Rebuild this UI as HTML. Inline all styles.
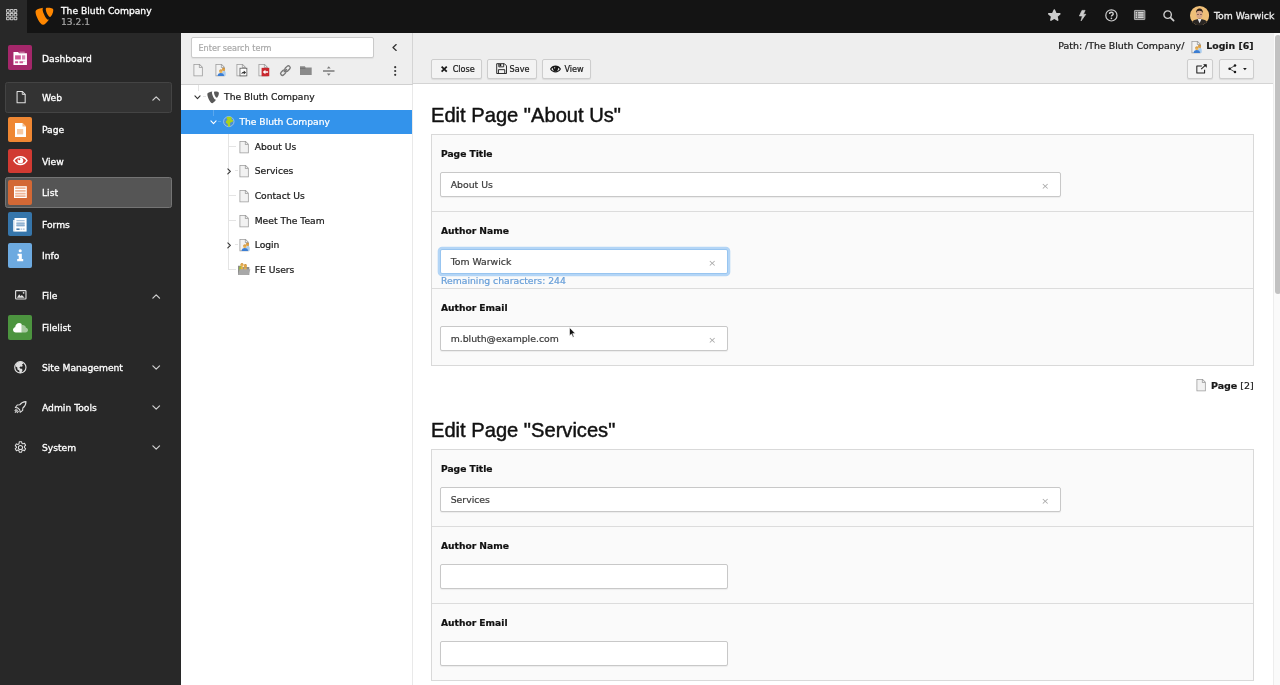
<!DOCTYPE html>
<html lang="en">
<head>
<meta charset="utf-8">
<title>TYPO3 Backend</title>
<style>
*{box-sizing:border-box;margin:0;padding:0}
html,body{width:1280px;height:685px;overflow:hidden;background:#fff}
body{font-family:"DejaVu Sans","Liberation Sans",sans-serif;font-size:9.19px;color:#1a1a1a;position:relative;line-height:1;-webkit-text-stroke:.22px}
svg{display:block;position:absolute;overflow:visible}
/* ---------- top bar ---------- */
#topbar{position:absolute;left:0;top:0;width:1280px;height:32.600px;background:#141414;will-change:transform;z-index:10}
#toggle{position:absolute;left:0;top:0;width:27px;height:32.600px;background:#282828}
.tb-title{position:absolute;left:61px;top:6.200px;-webkit-text-stroke:.3px;color:#fff;font-size:9.19px;white-space:nowrap}
.tb-ver{position:absolute;left:61px;top:17.200px;color:#a6a6a6;font-size:9.19px;white-space:nowrap}
.tb-user{position:absolute;left:1214px;top:11px;-webkit-text-stroke:.3px;color:#ececec;font-size:9.25px;white-space:nowrap}
/* ---------- module menu ---------- */
#sidebar{position:absolute;left:0;top:32px;width:181px;height:653px;background:#282828;will-change:transform}
.mi{position:absolute;left:0;width:180px;height:0;color:#fff;white-space:nowrap}
.mi .ic{position:absolute;left:8px;top:-11.700px;width:24.400px;height:24.400px;border-radius:2px}
.mi .tx{position:absolute;left:42px;top:-4.400px;font-size:9.19px;line-height:11px;-webkit-text-stroke:.3px}
.box{position:absolute;left:5px;width:166.500px;border-radius:2.500px}
/* ---------- tree ---------- */
#treepanel{position:absolute;left:181px;top:32px;width:232px;height:653px;background:#fff;border-right:1px solid #e9e9e9;will-change:transform}
#treebar{position:absolute;left:0;top:0;width:232px;height:52.500px;background:#eeeeee;border-bottom:1px solid #d0d0d0;border-right:1px solid #d4d4d4}
#search{position:absolute;left:9.900px;top:4.700px;width:183.100px;height:21.500px;background:#fff;border:1px solid #cacaca;border-radius:2px;box-shadow:0 1px 1px rgba(0,0,0,.06)}
#search span{position:absolute;left:6.600px;top:6.300px;font-size:8.100px;color:#a9a9a9;white-space:nowrap}
.row{position:absolute;left:0;width:231px;height:24.300px;z-index:2}
.row .tx{position:absolute;top:6.400px;font-size:9.19px;line-height:11px;white-space:nowrap;color:#1a1a1a}
.selbg{position:absolute;left:0;width:231px;height:24.100px;background:#3393eb;z-index:0}
.row.sel .tx{color:#fff}
.ln{position:absolute;background:#e4e4e4;z-index:1}
/* ---------- content ---------- */
#content{position:absolute;left:413px;top:32px;width:867px;height:653px;background:#fff;will-change:transform}
#docheader{position:absolute;left:0;top:0;width:859.800px;height:51.500px;background:#eeeeee;border-bottom:1px solid #d4d4d4}
.path{position:absolute;top:8.300px;font-size:9.420px;line-height:11px;white-space:nowrap;color:#1a1a1a}
.btn{position:absolute;top:27px;height:20px;background:#f3f3f3;border:1px solid #cdcdcd;border-radius:2px;box-shadow:0 1px 1px rgba(0,0,0,.08);font-size:8.100px;color:#1a1a1a;white-space:nowrap}
.btn .t{position:absolute;top:5px}
h1{position:absolute;left:18.300px;font-family:"Liberation Sans","DejaVu Sans",sans-serif;font-weight:400;font-size:20.400px;line-height:24px;color:#111;white-space:nowrap;transform:scaleX(.987);transform-origin:0 0;-webkit-text-stroke:.45px}
.panel{position:absolute;left:18px;width:823px;height:232px;background:#fafafa;border:1px solid #d9d9d9}
.sec{position:absolute;left:0;width:821px;height:77px;border-top:1px solid #dcdcdc}
.sec:first-child{border-top:0}
.lbl{position:absolute;left:9px;font-weight:700;font-size:9.130px;line-height:11px;white-space:nowrap;color:#111}
.inp{position:absolute;left:8px;height:24.600px;background:#fff;border:1px solid #c8c8c8;border-radius:2px;box-shadow:0 1px 1px rgba(0,0,0,.06)}
.inp.focus{border-color:#98c5f0;box-shadow:0 0 0 2.300px #b3d5f6}
.inp .v{position:absolute;left:9.700px;top:5.600px;font-size:9.300px;line-height:11px;white-space:nowrap;color:#3c3c3c}
.inp .x{position:absolute;right:10.400px;top:7.200px;font-size:9.500px;line-height:11px;color:#a6a6a6;-webkit-text-stroke:0}
.rem{position:absolute;left:9px;font-size:9.260px;line-height:11px;color:#689fd9;white-space:nowrap}
.pinfo{position:absolute;font-size:9.19px;line-height:11px;white-space:nowrap;color:#1a1a1a}
#sbtrack{position:absolute;left:859.800px;top:0;width:7.200px;height:653px;background:#fafafa;border-left:1px solid #ededed}
#sbthumb{position:absolute;left:861.800px;top:2.500px;width:6.600px;height:259px;background:#c1c1c1;border-radius:3px}
</style>
</head>
<body>

<div id="topbar"><div id="toggle"></div>
<svg style="left:5.8px;top:8.9px" width="11.4" height="11.4" viewBox="0 0 12 12" ><rect x="0.6" y="0.6" width="2.800" height="2.800" rx=".6" fill="none" stroke="#c6c6c6" stroke-width="1.100"/><rect x="4.6" y="0.6" width="2.800" height="2.800" rx=".6" fill="none" stroke="#c6c6c6" stroke-width="1.100"/><rect x="8.6" y="0.6" width="2.800" height="2.800" rx=".6" fill="none" stroke="#c6c6c6" stroke-width="1.100"/><rect x="0.6" y="4.6" width="2.800" height="2.800" rx=".6" fill="none" stroke="#c6c6c6" stroke-width="1.100"/><rect x="4.6" y="4.6" width="2.800" height="2.800" rx=".6" fill="none" stroke="#c6c6c6" stroke-width="1.100"/><rect x="8.6" y="4.6" width="2.800" height="2.800" rx=".6" fill="none" stroke="#c6c6c6" stroke-width="1.100"/><rect x="0.6" y="8.6" width="2.800" height="2.800" rx=".6" fill="none" stroke="#c6c6c6" stroke-width="1.100"/><rect x="4.6" y="8.6" width="2.800" height="2.800" rx=".6" fill="none" stroke="#c6c6c6" stroke-width="1.100"/><rect x="8.6" y="8.6" width="2.800" height="2.800" rx=".6" fill="none" stroke="#c6c6c6" stroke-width="1.100"/></svg>
<svg style="left:34.1px;top:6.8px" width="20.3" height="19.3" viewBox="0 0 16 16" preserveAspectRatio="none"><path fill="#ff8700" d="M11.900 10.400c-.2.100-.4.100-.6.100-1.800 0-4.500-6.400-4.500-8.500 0-.8.200-1 .4-1.300-2.200.3-4.900 1.100-5.700 2.100-.2.300-.3.700-.3 1.200 0 3.300 3.500 10.800 6 10.800 1.100 0 3-1.900 4.700-4.400M10.700.7c2.300 0 4.500.4 4.500 1.700 0 2.600-1.700 5.800-2.500 5.800-1.500 0-3.400-4.200-3.400-6.300 0-1 .4-1.200 1.400-1.200"/></svg>
<div class="tb-title">The Bluth Company</div><div class="tb-ver">13.2.1</div>
<svg style="left:1048.2px;top:9.3px" width="12.6" height="12.1" viewBox="0 0 16 16" preserveAspectRatio="none"><path fill="#cdcdcd" d="M8 1.300l2 4.600 5 .5-3.700 3.400 1 5L8 12.200l-4.300 2.600 1-5L1 6.400l5-.5z" stroke="#cdcdcd" stroke-width="2" stroke-linejoin="round"/></svg>
<svg style="left:1079px;top:9.7px" width="7.2" height="11.4" viewBox="0 0 8 12" preserveAspectRatio="none"><path fill="#cdcdcd" stroke="#cdcdcd" stroke-width=".7" stroke-linejoin="round" d="M3.300.4h3.500L4.800 4.500h2.800L2.300 11.500l1.400-5.200H.4z"/></svg>
<svg style="left:1105px;top:9px" width="12.8" height="12.8" viewBox="0 0 16 16" ><circle cx="8" cy="8" r="7" fill="none" stroke="#cfcfcf" stroke-width="1.500"/><path fill="none" stroke="#cfcfcf" stroke-width="1.700" d="M5.700 6.300c0-1.400 1-2.200 2.300-2.200s2.300.8 2.300 2c0 1.600-2.300 1.600-2.300 3.400"/><circle cx="8" cy="11.700" r="1.050" fill="#cfcfcf"/></svg>
<svg style="left:1134px;top:10.3px" width="11.3" height="10" viewBox="0 0 16 14" preserveAspectRatio="none"><rect x=".6" y=".6" width="14.800" height="12.800" rx=".6" fill="#6c6c6c" stroke="#c2c2c2" stroke-width="1.200"/><path fill="#d6d6d6" d="M2.400 2.800h2v2.200h-2zM5.800 2.800h7.800v2.200H5.800zM2.400 5.900h2v2.200h-2zM5.800 5.900h7.800v2.200H5.800zM2.400 9h2v2.200h-2zM5.800 9h7.800v2.200H5.800z"/></svg>
<svg style="left:1162.6px;top:9.7px" width="11.4" height="11.4" viewBox="0 0 16 16" ><circle cx="6.500" cy="6.500" r="5.200" fill="none" stroke="#cfcfcf" stroke-width="1.900"/><path stroke="#cfcfcf" stroke-width="2.400" stroke-linecap="round" d="M10.600 10.600l4.300 4.300"/></svg>
<svg style="left:1190.2px;top:5.5px" width="19.2" height="19.2" viewBox="0 0 20 20" ><clipPath id="av"><circle cx="10" cy="10" r="10"/></clipPath><g clip-path="url(#av)"><rect width="20" height="20" fill="#efbf78"/><path fill="#2a2623" d="M1 20c0-4 3-5.500 5.500-6l3.500-1 3.500 1c2.500.5 5.500 2 5.500 6z"/><path fill="#e8e8ee" d="M8 13.500l2 4.500 2-4.500z"/><ellipse cx="9.800" cy="8.600" rx="3.300" ry="4.400" fill="#d9a687"/><path fill="#2b1f1a" d="M6.300 7.500c-.3-3.500 1.500-5 3.700-5s3.800 1.500 3.300 5c-.5-1.800-1.500-2.600-3.500-2.600S6.800 5.700 6.300 7.500z"/><path fill="#3a2a24" d="M7.300 8.300h2v.6h-2zM10.400 8.300h2v.6h-2z"/></g></svg>
<div class="tb-user">Tom Warwick</div>
</div>
<div id="sidebar">
<div class="box" style="top:49.500px;height:31.500px;background:#333333;border:1px solid #444444"></div>
<div class="box" style="top:145px;height:31px;background:#555555;border:1px solid #747474"></div>
<div class="mi" style="top:25px"><div class="ic" style="background:#a4276a"><svg style="left:5px;top:5.2px" width="14.4" height="14.4" viewBox="0 0 16 16" ><path fill="#fff" d="M.5 1h5.300l.8 1.500h8.900v13H.500z"/><path fill="#fff" opacity=".55" d="M7 .800h6v1H7z"/><path fill="#cf5a97" d="M2.300 4.800h6.400v4.600H2.300z"/><path fill="#d98ab5" d="M10 4.800h3.600v4.600H10z"/><path fill="#cf5a97" d="M2.300 11.300h3.400v2.200H2.300zM7.200 11.300h4v2.200h-4z"/><path fill="#e7b3cf" d="M11.200 11.300h2.400v1h-2.400z"/></svg></div><div class="tx" style="top:-4.30px">Dashboard</div></div>
<div class="mi" style="top:65px"><svg style="left:14.7px;top:-6.3px" width="12.25" height="12.25" viewBox="0 0 16 16" ><path fill="none" stroke="#e0e0e0" stroke-width="1.400" stroke-linejoin="round" d="M2.700.7h7l3.600 3.600v11H2.700z"/><path fill="none" stroke="#e0e0e0" stroke-width="1.200" d="M9.500.7v3.800h3.800"/></svg><svg style="left:151.7px;top:-1.4px" width="8.4" height="5" viewBox="0 0 10 6" ><path fill="none" stroke="#cfcfcf" stroke-width="1.500" stroke-linecap="round" stroke-linejoin="round" d="M1 5l4-4 4 4"/></svg><div class="tx" style="top:-5.30px">Web</div></div>
<div class="mi" style="top:97px"><div class="ic" style="background:#ef8733"><svg style="left:7px;top:5.3px" width="11" height="14" viewBox="0 0 11 14" ><path fill="#fff" d="M0 0h7.500L11 3.500V14H0z"/><path fill="#f6c9a4" d="M2 6h6.200v5.400H2z"/><path fill="#f3b98a" d="M7.500 0v3.500H11z"/></svg></div><div class="tx" style="top:-5.30px">Page</div></div>
<div class="mi" style="top:128.5px"><div class="ic" style="background:#d13a32"><svg style="left:4.7px;top:7.4px" width="14.8" height="9.4" viewBox="0 0 16 10" ><path fill="none" stroke="#fff" stroke-width="1.500" d="M.9 5C2.600 2.200 5.200.8 8 .8s5.400 1.400 7.100 4.200C13.400 7.800 10.800 9.200 8 9.200S2.600 7.800.9 5z"/><circle cx="8" cy="4.800" r="3.100" fill="#fff"/><circle cx="6.800" cy="3.500" r="1.100" fill="#d13a32"/></svg></div><div class="tx" style="top:-4.80px">View</div></div>
<div class="mi" style="top:160px"><div class="ic" style="background:#d36835"><svg style="left:5.7px;top:5.8px" width="12.8" height="12.2" viewBox="0 0 13 12" ><rect width="13" height="12" fill="#fff"/><path fill="#efb597" d="M1.200 1.100h10.600v1.800H1.200zM1.200 3.900h10.600v1.800H1.200zM1.200 6.600h10.600v1.800H1.200zM1.200 9.300h10.600v1.700H1.200z"/></svg></div><div class="tx" style="top:-5.30px">List</div></div>
<div class="mi" style="top:191.5px"><div class="ic" style="background:#3676ab"><svg style="left:5px;top:6px" width="13.6" height="13.6" viewBox="0 0 14 14" ><path fill="#fff" opacity=".75" d="M0 2h2v12H0z"/><path fill="#fff" d="M1.500 0H14v14H1.500z"/><path fill="#a9c3dc" d="M3.500 2h8.500v1.300H3.500zM3.500 4.300h8.500v4.400H3.500z"/><path fill="#7fa6c9" d="M3.500 5.600h8.500v.7H3.500zM3.500 7.200h8.500v.7H3.500z"/><path fill="#2f6a9e" d="M3.500 10.800h3.300v1.400H3.500z"/><path fill="#a9c3dc" d="M7.800 10.800h1.800v1.400H7.800zM10.300 10.800H12v1.400h-1.700z"/></svg></div><div class="tx" style="top:-4.80px">Forms</div></div>
<div class="mi" style="top:223px"><div class="ic" style="background:#6daae0"><svg style="left:9.2px;top:5.8px" width="6.4" height="12.4" viewBox="0 0 7 13" ><circle cx="3.500" cy="1.700" r="1.700" fill="#fff"/><path fill="#fff" d="M.6 5h4.700v5.600h1.500V13H.2v-2.400h1.700V7.200H.6z"/></svg></div><div class="tx" style="top:-5.30px">Info</div></div>
<div class="mi" style="top:263px"><svg style="left:14.6px;top:-4.6px" width="11.6" height="9.6" viewBox="0 0 12 10" ><rect x=".6" y=".6" width="10.800" height="8.800" rx=".8" fill="none" stroke="#e0e0e0" stroke-width="1.200"/><path fill="#e0e0e0" d="M2 8.200l2.300-3.800 1.500 2.200 1.300-1.500L10 8.200z"/><circle cx="8.900" cy="2.900" r=".9" fill="#e0e0e0"/></svg><svg style="left:151.7px;top:-1.4px" width="8.4" height="5" viewBox="0 0 10 6" ><path fill="none" stroke="#cfcfcf" stroke-width="1.500" stroke-linecap="round" stroke-linejoin="round" d="M1 5l4-4 4 4"/></svg><div class="tx" style="top:-5.30px">File</div></div>
<div class="mi" style="top:295px"><div class="ic" style="background:#4c943f"><svg style="left:4.8px;top:7.3px" width="15" height="9.4" viewBox="0 0 16 10" ><path fill="#fff" opacity=".5" d="M9 10h4.300c1.500 0 2.700-1.100 2.700-2.500 0-1.300-1-2.300-2.200-2.500C13.500 3.300 12 2.200 10.500 2.200c-.5 0-1 .1-1.500.4z"/><path fill="#fff" d="M9.200 10H3C1.300 10 0 8.800 0 7.200c0-1.400 1-2.500 2.300-2.800C2.500 1.900 4.400 0 6.600 0c1 0 1.900.4 2.600 1z"/></svg></div><div class="tx" style="top:-5.30px">Filelist</div></div>
<div class="mi" style="top:335px"><svg style="left:14.1px;top:-6.3px" width="12.7" height="12.7" viewBox="0 0 16 16" ><circle cx="8" cy="8" r="7.100" fill="none" stroke="#e0e0e0" stroke-width="1.500"/><path fill="#e0e0e0" d="M4.600 2c1.800-1.100 4.600-1.300 6.300-.5l.8 2-1.700 1 1.200 1.700-1.700 1.200-1.600-.6-1.100 1.600 1.500 1.400 1.900.1.400 2.200-1.600 3.100-1.900.1-.5-3.200-2.200-1.500-.4-2.600-1.900-1 .6-2.800z"/></svg><svg style="left:151.7px;top:-1.9px" width="8.4" height="5" viewBox="0 0 10 6" ><path fill="none" stroke="#cfcfcf" stroke-width="1.500" stroke-linecap="round" stroke-linejoin="round" d="M1 1l4 4 4-4"/></svg><div class="tx" style="top:-5.30px">Site Management</div></div>
<div class="mi" style="top:375px"><svg style="left:13.8px;top:-6.3px" width="12.8" height="12.5" viewBox="0 0 16 16" ><path fill="none" stroke="#e0e0e0" stroke-width="1.350" stroke-linejoin="round" d="M15.200.8c-3.300.1-6.100 1.400-8.100 4.100L4 5.100 1.500 8.300l3 .5 2.700 2.700.5 3 3.200-2.500.2-3.100c2.700-2 4-4.800 4.100-8.100zM4.500 11.500L1 15M3 10.300L.7 12.500M5.700 13l-2.200 2.300"/></svg><svg style="left:151.7px;top:-1.9px" width="8.4" height="5" viewBox="0 0 10 6" ><path fill="none" stroke="#cfcfcf" stroke-width="1.500" stroke-linecap="round" stroke-linejoin="round" d="M1 1l4 4 4-4"/></svg><div class="tx" style="top:-5.30px">Admin Tools</div></div>
<div class="mi" style="top:415px"><svg style="left:14px;top:-6.5px" width="12.9" height="13" viewBox="0 0 16 16" ><path fill="none" stroke="#e0e0e0" stroke-width="1.300" stroke-linejoin="round" d="M6.600.8h2.800l.4 2 1.300.7 1.900-.7 1.400 2.400-1.500 1.400v1.500l1.500 1.400-1.400 2.400-1.900-.7-1.300.7-.4 2H6.600l-.4-2-1.300-.7-1.900.7-1.400-2.400 1.500-1.400V7.300L1.600 5.900 3 3.500l1.900.7 1.300-.7z"/><circle cx="8" cy="8" r="2.600" fill="none" stroke="#e0e0e0" stroke-width="1.300"/></svg><svg style="left:151.7px;top:-1.9px" width="8.4" height="5" viewBox="0 0 10 6" ><path fill="none" stroke="#cfcfcf" stroke-width="1.500" stroke-linecap="round" stroke-linejoin="round" d="M1 1l4 4 4-4"/></svg><div class="tx" style="top:-5.30px">System</div></div>
</div>
<div id="treepanel"><div id="treebar">
<div id="search"><span>Enter search term</span></div>
<svg style="left:211px;top:12px" width="5" height="7" viewBox="0 0 5 7" ><path fill="none" stroke="#333" stroke-width="1.300" stroke-linecap="round" stroke-linejoin="round" d="M4.200.6L1 3.500l3.200 2.900"/></svg>
<svg style="left:10.599999999999994px;top:31.9px" width="12.25" height="12.25" viewBox="0 0 16 16" ><path fill="#f2f2f2" d="M2.5.5v15h11V4.2L9.8.5z"/><path fill="#9a9a9a" d="M2 0v16h12V4L10 0H2zm1 1h6v4h4v10H3V1zm7 .4L12.6 4H10V1.400z"/></svg>
<svg style="left:32.5px;top:31.9px" width="12.25" height="12.25" viewBox="0 0 16 16" ><path fill="#f2f2f2" d="M2.5.5v15h11V4.2L9.8.5z"/><path fill="#9a9a9a" d="M2 0v16h12V4L10 0H2zm1 1h6v4h4v10H3V1zm7 .4L12.6 4H10V1.400z"/><path fill="#a9cdf0" d="M10.600 15.300v-3.600c0-1.600 1-2.500 2.300-2.500s2.400.9 2.400 2.500v3.600z"/><circle cx="12.400" cy="7.200" r="2" fill="#dfa044"/><path fill="#c98a2e" d="M10.500 6.600c.2-1.200 1-1.700 1.900-1.700s1.700.5 1.900 1.700c-.7-.6-1.300-.8-1.900-.8s-1.200.2-1.900.8z"/><path fill="#3b7dd2" d="M4.700 15.600c0-2.700 1.600-4 4.200-4s4.200 1.300 4.200 4z"/><circle cx="8.900" cy="9.700" r="2.200" fill="#e8b257"/><path fill="#c98a2e" d="M6.800 9.100c.2-1.300 1.100-1.900 2.100-1.900s1.900.6 2.100 1.900c-.8-.7-1.400-.9-2.100-.9s-1.300.2-2.100.9z"/></svg>
<svg style="left:53.599999999999994px;top:31.9px" width="12.25" height="12.25" viewBox="0 0 16 16" ><path fill="#f2f2f2" d="M2.5.5v15h11V4.2L9.8.5z"/><path fill="#9a9a9a" d="M2 0v16h12V4L10 0H2zm1 1h6v4h4v10H3V1zm7 .4L12.6 4H10V1.400z"/><rect x="6.500" y="5.500" width="9" height="10" fill="#fff" stroke="#555" stroke-width="1"/><path fill="#333" d="M8.300 13.500c0-2.200 1.200-3.500 3.200-3.500V8.400l3 2.600-3 2.600V12c-1.500 0-2.500.4-3.200 1.500z"/></svg>
<svg style="left:75.5px;top:31.9px" width="12.25" height="12.25" viewBox="0 0 16 16" ><path fill="#f2f2f2" d="M2.5.5v15h11V4.2L9.8.5z"/><path fill="#9a9a9a" d="M2 0v16h12V4L10 0H2zm1 1h6v4h4v10H3V1zm7 .4L12.6 4H10V1.400z"/><rect x="6" y="5" width="10" height="11" fill="#c8282f"/><path fill="#fff" d="M7.500 10.500l3.500-3v2h3.500v2H11v2z"/></svg>
<svg style="left:98.5px;top:32.7px" width="10.8" height="11.2" viewBox="0 0 16 16" ><g fill="none" stroke="#787878" stroke-width="2" stroke-linecap="round"><rect x="6.600" y="2.200" width="9" height="5.400" rx="2.700" transform="rotate(-45 11.100 4.900)" /><rect x=".4" y="8.400" width="9" height="5.400" rx="2.700" transform="rotate(-45 4.900 11.100)"/><path d="M6.200 9.800l3.600-3.600"/></g></svg>
<svg style="left:119.30000000000001px;top:34px" width="11.7" height="9.2" viewBox="0 0 12 9" ><path fill="#8a8a8a" d="M0 0h5l.8 1.300H12V9H0z"/><path fill="#6f6f6f" d="M0 1.700h5.500v.9H0z"/></svg>
<svg style="left:141.5px;top:33.5px" width="11.5" height="10" viewBox="0 0 12 10" ><path fill="#7a7a7a" d="M0 4.300h12v1.400H0zM6 0l2 2.300H4zM6 10l2-2.300H4z"/></svg>
<svg style="left:213px;top:34px" width="2.4" height="10" viewBox="0 0 2.400 10" ><circle cx="1.200" cy="1.200" r="1.100" fill="#333"/><circle cx="1.200" cy="5" r="1.100" fill="#333"/><circle cx="1.200" cy="8.800" r="1.100" fill="#333"/></svg>
</div>
<div class="ln" style="left:16.600px;top:53px;width:1px;height:6px"></div>
<div class="row" style="top:52.50px"><svg style="left:13.2px;top:10.7px" width="7" height="4.6" viewBox="0 0 7 5" ><path fill="none" stroke="#333" stroke-width="1.200" stroke-linecap="round" stroke-linejoin="round" d="M.7.900l2.800 3 2.800-3"/></svg><svg style="left:25.0px;top:6.215px" width="13.9" height="13.2" viewBox="0 0 16 16" ><path fill="#585858" d="M11.900 10.400c-.2.100-.4.100-.6.100-1.800 0-4.500-6.400-4.500-8.500 0-.8.200-1 .4-1.300-2.200.3-4.900 1.100-5.700 2.100-.2.300-.3.700-.3 1.200 0 3.300 3.500 10.800 6 10.800 1.100 0 3-1.900 4.700-4.400M10.700.7c2.300 0 4.500.4 4.500 1.700 0 2.600-1.700 5.800-2.500 5.800-1.500 0-3.400-4.200-3.400-6.300 0-1 .4-1.200 1.400-1.200"/></svg><div class="tx" style="left:43.10px;top:6.50px">The Bluth Company</div></div>
<div class="selbg" style="top:77.58px"></div>
<div class="row sel" style="top:77.18px"><svg style="left:28.5px;top:10.7px" width="7" height="4.6" viewBox="0 0 7 5" ><path fill="none" stroke="#fff" stroke-width="1.200" stroke-linecap="round" stroke-linejoin="round" d="M.7.900l2.800 3 2.800-3"/></svg><svg style="left:41.599999999999994px;top:7.015px" width="11.6" height="11.2" viewBox="0 0 16 16" preserveAspectRatio="none"><circle cx="8" cy="8" r="7.200" fill="#4b8fd6" stroke="#b9d3ee" stroke-width="1"/><path fill="#a9d21e" d="M5.500 1.500c2.200-.9 5-.5 6.500.5l-.3 2.500 2.300 1.500-.8 2.500-2.400.3-1.300 2.300.8 2.100-1.700 2.600-1.700-1-.5-3.200-2.500-1.800.2-2.700 2.200-1.800-1.500-1.600z"/></svg><div class="tx" style="left:58.40px;top:6.82px">The Bluth Company</div></div>
<div class="row" style="top:101.86px"><svg style="left:56.6px;top:6.715px" width="12.25" height="12.25" viewBox="0 0 16 16" ><path fill="#f2f2f2" d="M2.5.5v15h11V4.2L9.8.5z"/><path fill="#9a9a9a" d="M2 0v16h12V4L10 0H2zm1 1h6v4h4v10H3V1zm7 .4L12.6 4H10V1.400z"/></svg><div class="tx" style="left:73.70px;top:7.14px">About Us</div></div>
<div class="row" style="top:126.54px"><svg style="left:45.7px;top:9.6px" width="4.4" height="6.8" viewBox="0 0 5 7" ><path fill="none" stroke="#333" stroke-width="1.200" stroke-linecap="round" stroke-linejoin="round" d="M.9.700l3 2.800-3 2.800"/></svg><svg style="left:56.6px;top:6.715px" width="12.25" height="12.25" viewBox="0 0 16 16" ><path fill="#f2f2f2" d="M2.5.5v15h11V4.2L9.8.5z"/><path fill="#9a9a9a" d="M2 0v16h12V4L10 0H2zm1 1h6v4h4v10H3V1zm7 .4L12.6 4H10V1.400z"/></svg><div class="tx" style="left:73.70px;top:6.46px">Services</div></div>
<div class="row" style="top:151.22px"><svg style="left:56.6px;top:6.715px" width="12.25" height="12.25" viewBox="0 0 16 16" ><path fill="#f2f2f2" d="M2.5.5v15h11V4.2L9.8.5z"/><path fill="#9a9a9a" d="M2 0v16h12V4L10 0H2zm1 1h6v4h4v10H3V1zm7 .4L12.6 4H10V1.400z"/></svg><div class="tx" style="left:73.70px;top:6.78px">Contact Us</div></div>
<div class="row" style="top:175.90px"><svg style="left:56.6px;top:6.715px" width="12.25" height="12.25" viewBox="0 0 16 16" ><path fill="#f2f2f2" d="M2.5.5v15h11V4.2L9.8.5z"/><path fill="#9a9a9a" d="M2 0v16h12V4L10 0H2zm1 1h6v4h4v10H3V1zm7 .4L12.6 4H10V1.400z"/></svg><div class="tx" style="left:73.70px;top:7.10px">Meet The Team</div></div>
<div class="row" style="top:200.58px"><svg style="left:45.7px;top:9.6px" width="4.4" height="6.8" viewBox="0 0 5 7" ><path fill="none" stroke="#333" stroke-width="1.200" stroke-linecap="round" stroke-linejoin="round" d="M.9.700l3 2.800-3 2.800"/></svg><svg style="left:56.6px;top:6.715px" width="12.25" height="12.25" viewBox="0 0 16 16" ><path fill="#f2f2f2" d="M2.5.5v15h11V4.2L9.8.5z"/><path fill="#9a9a9a" d="M2 0v16h12V4L10 0H2zm1 1h6v4h4v10H3V1zm7 .4L12.6 4H10V1.400z"/><path fill="#a9cdf0" d="M10.600 15.300v-3.600c0-1.600 1-2.500 2.300-2.500s2.400.9 2.400 2.500v3.600z"/><circle cx="12.400" cy="7.200" r="2" fill="#dfa044"/><path fill="#c98a2e" d="M10.500 6.600c.2-1.200 1-1.700 1.900-1.700s1.700.5 1.900 1.700c-.7-.6-1.300-.8-1.900-.8s-1.200.2-1.900.8z"/><path fill="#3b7dd2" d="M4.700 15.600c0-2.700 1.600-4 4.200-4s4.200 1.300 4.200 4z"/><circle cx="8.900" cy="9.700" r="2.200" fill="#e8b257"/><path fill="#c98a2e" d="M6.800 9.100c.2-1.300 1.100-1.900 2.100-1.900s1.900.6 2.100 1.900c-.8-.7-1.400-.9-2.100-.9s-1.300.2-2.100.9z"/></svg><div class="tx" style="left:73.70px;top:6.42px">Login</div></div>
<div class="row" style="top:225.26px"><svg style="left:57.1px;top:5.615px" width="12.4" height="12" viewBox="0 0 12.4 12" ><path fill="#8c8c8c" d="M0 2.700h3.300l1 1.300h7V12H0z"/><path fill="#9cc32b" d="M1.300 7.500V4.600c0-.9.700-1.400 1.500-1.400s1.500.5 1.500 1.400v2.900z"/><path fill="#e6b04a" d="M2.700 7V3.800h2.600V7zM6.100 7.500V4.500h2.600v3z"/><circle cx="4" cy="2.100" r="1.700" fill="#e8b257"/><circle cx="7.400" cy="2.900" r="1.600" fill="#e0a445"/><path fill="#c98a2e" d="M2.400 1.700C2.600.700 3.300.300 4 .3s1.400.4 1.600 1.400C5 1.200 4.500 1 4 1s-1 .2-1.600.7zM5.900 2.500c.2-.9.800-1.300 1.500-1.300s1.300.4 1.500 1.300c-.5-.5-1-.6-1.500-.6s-1 .1-1.500.6z"/><path fill="#a8a8a8" d="M1.700 6.300h10.700L10.600 12H0z"/></svg><div class="tx" style="left:73.70px;top:6.74px">FE Users</div></div>
<div class="ln" style="left:31.900px;top:78px;width:1px;height:5.500px;background:#5aa8ef;z-index:3"></div>
<div class="ln" style="left:47.3px;top:101.86px;width:1px;height:135.74px"></div>
<div class="ln" style="left:47.3px;top:113.70px;width:8px;height:1px"></div>
<div class="ln" style="left:47.3px;top:163.06px;width:8px;height:1px"></div>
<div class="ln" style="left:47.3px;top:187.74px;width:8px;height:1px"></div>
<div class="ln" style="left:47.3px;top:237.10px;width:8px;height:1px"></div>
<div class="ln" style="left:54.3px;top:138.38px;width:3px;height:1px"></div>
<div class="ln" style="left:54.3px;top:212.42px;width:3px;height:1px"></div>
<div class="ln" style="left:21.500px;top:64.34px;width:3px;height:1px"></div>
<div class="ln" style="left:37px;top:89.02px;width:3px;height:1px;background:#5aa8ef;z-index:3"></div>
</div>
<div id="content"><div id="docheader">
<div class="path" style="left:645.300px">Path: /The Bluth Company/</div>
<svg style="left:777.2px;top:9.200000000000003px" width="12.25" height="12.25" viewBox="0 0 16 16" ><path fill="#f2f2f2" d="M2.5.5v15h11V4.2L9.8.5z"/><path fill="#9a9a9a" d="M2 0v16h12V4L10 0H2zm1 1h6v4h4v10H3V1zm7 .4L12.6 4H10V1.400z"/><path fill="#a9cdf0" d="M10.600 15.300v-3.600c0-1.600 1-2.500 2.300-2.500s2.400.9 2.400 2.500v3.600z"/><circle cx="12.400" cy="7.200" r="2" fill="#dfa044"/><path fill="#c98a2e" d="M10.500 6.600c.2-1.200 1-1.700 1.900-1.700s1.700.5 1.900 1.700c-.7-.6-1.300-.8-1.900-.8s-1.200.2-1.900.8z"/><path fill="#3b7dd2" d="M4.700 15.600c0-2.700 1.600-4 4.200-4s4.200 1.300 4.200 4z"/><circle cx="8.900" cy="9.700" r="2.200" fill="#e8b257"/><path fill="#c98a2e" d="M6.800 9.100c.2-1.300 1.100-1.900 2.100-1.900s1.900.6 2.100 1.900c-.8-.7-1.400-.9-2.100-.9s-1.300.2-2.100.9z"/></svg>
<div class="path" style="left:793.300px;font-weight:700;font-size:9.350px">Login [6]</div>
<div class="btn" style="left:18px;width:50.500px"><svg style="left:8.7px;top:5.7px" width="6.4" height="6.2" viewBox="0 0 6 6" ><path stroke="#1a1a1a" stroke-width="1.700" d="M.5.500l5 5M5.500.500l-5 5"/></svg><span class="t" style="left:20.700px">Close</span></div>
<div class="btn" style="left:74.300px;width:49.500px"><svg style="left:7.4px;top:3.2px" width="11.2" height="11.2" viewBox="0 0 16 16" ><path fill="none" stroke="#1a1a1a" stroke-width="1.300" stroke-linejoin="round" d="M1 1h11l3 3v11H1z"/><path fill="none" stroke="#1a1a1a" stroke-width="1.300" d="M4 1v4.500h7V1M3.500 15V9.500h9V15"/><path fill="#1a1a1a" d="M5 1.500h2.500v3H5z"/></svg><span class="t" style="left:21.300px">Save</span></div>
<div class="btn" style="left:129px;width:48.500px"><svg style="left:7px;top:4.8px" width="11" height="8" viewBox="0 0 16 10" ><path fill="none" stroke="#1a1a1a" stroke-width="1.600" d="M.9 5C2.600 2.200 5.200.8 8 .8s5.400 1.400 7.100 4.200C13.400 7.800 10.800 9.200 8 9.200S2.600 7.800.9 5z"/><path fill="#1a1a1a" d="M3 2.600C4.500 1.200 6.200.5 8 .5s3.500.7 5 2.100L11.500 5a3.500 3.500 0 0 1-7 0z"/><circle cx="8" cy="4.500" r="3.400" fill="#1a1a1a"/><circle cx="6.700" cy="3.300" r="1" fill="#f4f4f4"/></svg><span class="t" style="left:21.500px">View</span></div>
<div class="btn" style="left:774px;width:25.500px"><svg style="left:7.6px;top:3.9px" width="11" height="9.6" viewBox="0 0 16 14" preserveAspectRatio="none"><path fill="none" stroke="#1a1a1a" stroke-width="1.500" stroke-linejoin="round" d="M8.500 3H1.200v10h11.300V8.500"/><path fill="none" stroke="#1a1a1a" stroke-width="1.500" d="M7.500 7.500l6-5.500"/><path fill="#1a1a1a" d="M10.300.400h5.300v5z"/></svg></div>
<div class="btn" style="left:806px;width:34.500px"><svg style="left:8.4px;top:3.7px" width="8.6" height="9.6" viewBox="0 0 14 16" ><g fill="#1a1a1a"><circle cx="11.500" cy="2.500" r="2.100"/><circle cx="2.500" cy="8" r="2.100"/><circle cx="11.500" cy="13.500" r="2.100"/></g><path fill="none" stroke="#1a1a1a" stroke-width="1.200" d="M11.500 2.500L2.500 8l9 5.500"/></svg><svg style="left:23px;top:7.7px" width="3.8" height="2.2" viewBox="0 0 4 2.400" ><path fill="#1a1a1a" d="M0 0h4L2 2.400z"/></svg></div>
</div>
<h1 style="top:70.7px">Edit Page &quot;About Us&quot;</h1>
<div class="panel" style="top:102px">
<div class="sec" style="top:0px"><div class="lbl" style="top:13.7px">Page Title</div>
<div class="inp" style="top:37px;width:620.7px"><span class="v">About Us</span><span class="x">×</span></div>
</div>
<div class="sec" style="top:76px"><div class="lbl" style="top:13.5px">Author Name</div>
<div class="inp focus" style="top:37px;width:287.7px"><span class="v">Tom Warwick</span><span class="x">×</span></div>
<div class="rem" style="top:62.5px">Remaining characters: 244</div>
</div>
<div class="sec" style="top:153px"><div class="lbl" style="top:13.5px">Author Email</div>
<div class="inp" style="top:37px;width:287.7px"><span class="v">m.bluth@example.com</span><span class="x">×</span></div>
</div>
</div>
<svg style="left:782px;top:347px" width="12.25" height="12.25" viewBox="0 0 16 16" ><path fill="#f2f2f2" d="M2.5.5v15h11V4.2L9.8.5z"/><path fill="#9a9a9a" d="M2 0v16h12V4L10 0H2zm1 1h6v4h4v10H3V1zm7 .4L12.6 4H10V1.400z"/></svg>
<div class="pinfo" style="right:26.200px;top:347.500px;font-size:9.500px"><b>Page</b> [2]</div>
<h1 style="top:385.7px">Edit Page &quot;Services&quot;</h1>
<div class="panel" style="top:417px">
<div class="sec" style="top:0px"><div class="lbl" style="top:13.7px">Page Title</div>
<div class="inp" style="top:37px;width:620.7px"><span class="v">Services</span><span class="x">×</span></div>
</div>
<div class="sec" style="top:76px"><div class="lbl" style="top:13.5px">Author Name</div>
<div class="inp" style="top:37px;width:287.7px"></div>
</div>
<div class="sec" style="top:153px"><div class="lbl" style="top:13.5px">Author Email</div>
<div class="inp" style="top:37px;width:287.7px"></div>
</div>
</div>
<svg style="left:155.5px;top:294.5px" width="7" height="11" viewBox="0 0 7 11" ><path fill="#111" stroke="#fff" stroke-width=".6" d="M.5.500v8.300l2-1.800 1.400 3.200 1.200-.5-1.400-3.100h2.600z"/></svg>
<div id="sbtrack"></div><div id="sbthumb"></div>
</div>
</body></html>
